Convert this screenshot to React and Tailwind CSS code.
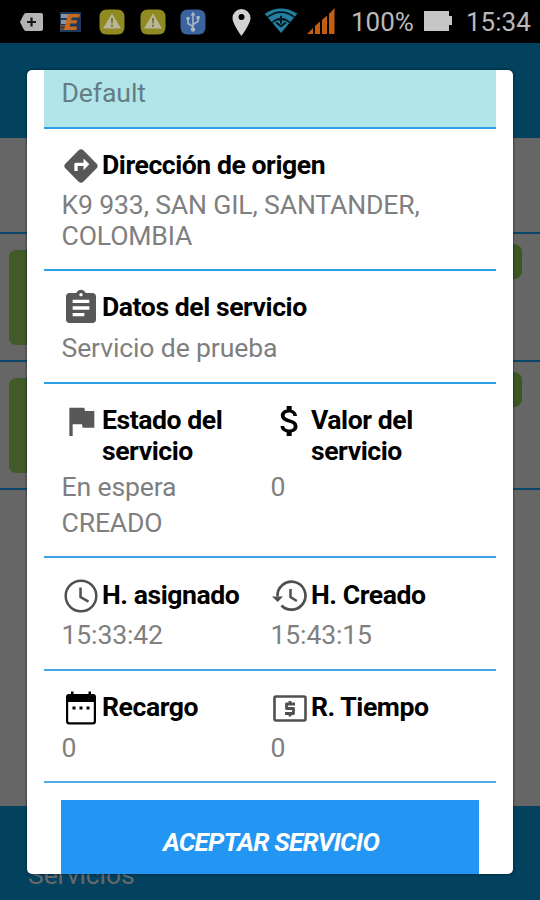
import { MdDirections, MdAssignment, MdFlag, MdAttachMoney } from "react-icons/md";

function WarningBadge() {
  return (
    <svg className="h-[26px] w-[26px]" viewBox="0 0 26 26">
      <path d="M8 .5h10q7.500 0 7.500 7.500v10q0 7.500-7.500 7.500H8Q.5 25.500.5 18V8Q.5.5 8 .5z" fill="#8f8a22" />
      <path d="M13 4.500 22 19.500H4z" fill="#b9b69a" />
      <path d="M12 9h2l-.3 5.500h-1.400zM12 15.800h2v2h-2z" fill="#77731d" />
    </svg>
  );
}

function StatusBar() {
  return (
    <div className="flex h-[43px] shrink-0 items-center bg-black pl-[20px] text-[#b9b9b9]">
      <svg className="h-[20px] w-[23px]" viewBox="0 0 23 20">
        <path d="M6 1h15q2 0 2 2v14q0 2-2 2H6q-1.500 0-2.500-2L0 10l3.500-7q1-2 2.500-2z" fill="#b4b4b4" />
        <path d="M11.500 5.500v9M7 10h9" stroke="#161616" strokeWidth="2.200" />
      </svg>
      <svg className="ml-[17px] h-[20px] w-[21px]" viewBox="0 0 21 20">
        <path d="M0 0h21v20H0z" fill="#1d3858" />
        <path d="M1 2h7v4H1zM1 8h6v4H1z" fill="#8b93a0" />
        <path d="M0 14h8M0 17h10" stroke="#6c4a38" strokeWidth="2" />
        <path d="M8 2h12l-.8 3.500h-7.400l-.6 2.700h6l-.8 3.300h-6l-.7 3H17l-.8 3.500H4z" fill="#c46a25" />
      </svg>
      <div className="ml-[18px] flex gap-[14.500px]">
        <WarningBadge />
        <WarningBadge />
        <svg className="h-[26px] w-[26px]" viewBox="0 0 26 26">
          <path d="M8 .5h10q7.500 0 7.500 7.500v10q0 7.500-7.500 7.500H8Q.5 25.500.5 18V8Q.5.5 8 .5z" fill="#3b639f" />
          <path d="M13 5v16M13 17.500l-5-3V10M13 15.500l5-3V9" fill="none" stroke="#aab5c5" strokeWidth="1.600" />
          <path d="m13 2.500 2.500 4h-5zM16.500 7h3.200v3.200h-3.200z" fill="#aab5c5" />
          <circle cx="8" cy="9.500" r="1.800" fill="#aab5c5" />
          <circle cx="13" cy="20.500" r="2.200" fill="#aab5c5" />
        </svg>
      </div>
      <svg className="mt-[2px] ml-[26px] h-[27px] w-[19px]" viewBox="0 0 19 27">
        <path d="M9.500 0a9 9 0 0 0-9 9c0 6 9 18 9 18s9-12 9-18a9 9 0 0 0-9-9z" fill="#d2d2d2" />
        <circle cx="9.500" cy="8" r="3" fill="#000" />
      </svg>
      <svg className="-mt-[3px] ml-[12px] h-[25px] w-[36px]" viewBox="0 0 36 26">
        <path d="M1 6Q18-5 35 6L18 26z" fill="#2380a2" />
        <path d="M4 9.500Q18-1 32 9.500M9 15q9-8 18 0" fill="none" stroke="#04171f" strokeWidth="1.800" />
        <path d="M18 8v8M13 15l5 4 5-4M14 12h8" fill="none" stroke="#04171f" strokeWidth="2" />
      </svg>
      <svg className="-mt-[2px] ml-[8px] h-[26px] w-[28px]" viewBox="0 0 28 26" fill="#c25d11">
        <path d="M0 26l6-6v6zM8 26v-8l5-4.500V26zM15 26V12l5-4.500V26zM22 26V6l5.500-6v26z" />
      </svg>
      <span className="ml-[16px] w-[62px] pt-[2px] text-[26px] whitespace-nowrap">100%</span>
      <svg className="-mt-[2px] ml-[11px] h-[20px] w-[28px]" viewBox="0 0 28 20">
        <path d="M0 0h25v5h3v9h-3v6H0z" fill="#c6c6c6" />
      </svg>
      <span className="ml-[14px] pt-[2px] text-[26px] whitespace-nowrap">15:34</span>
    </div>
  );
}

function ListItem() {
  return (
    <div className="flex h-[128px] items-start justify-between border-b-2 border-[#0b466a] pr-[18px] pl-[9px]">
      <div className="mt-[16px] h-[95px] w-[80px] rounded-[7px] bg-[#415a27]" />
      <div className="mt-[10px] h-[35px] w-[80px] rounded-[8px] bg-[#3b5822]" />
    </div>
  );
}

function BackgroundScreen() {
  return (
    <>
      <div className="h-[95px] shrink-0 bg-[#02425f]" />
      <div className="h-[668px] shrink-0 bg-[#666666]">
        <div className="h-[96px] border-b-2 border-[#0b466a]" />
        <ListItem />
        <ListItem />
      </div>
      <div className="flex-1 bg-[#02425f] pt-[53px] pl-[28px] text-[26.500px] leading-[31px] tracking-[-0.1px] text-[#66686a]">
        Servicios
      </div>
    </>
  );
}

function ClockIcon() {
  return (
    <svg className="h-[40px] w-[40px]" viewBox="0 0 40 40" fill="none" stroke="#505050">
      <circle cx="20" cy="20" r="15.300" strokeWidth="2.500" />
      <path d="M19.500 11.500V21l8 4.700" strokeWidth="2.500" />
    </svg>
  );
}

function HistoryIcon() {
  return (
    <svg className="h-[40px] w-[40px]" viewBox="0 0 40 40" fill="none" stroke="#505050">
      <path d="M7.500 20.500A14 14 0 1 1 11.500 29.500" strokeWidth="2.700" />
      <path d="M2 20.500h11l-5.300 5.500z" fill="#505050" stroke="none" />
      <path d="M20.500 13v8l6.300 4" strokeWidth="2.500" />
    </svg>
  );
}

function DateIcon() {
  return (
    <svg className="h-[40px] w-[40px]" viewBox="0 0 40 40">
      <path d="M10 3.500h2.500V6h15V3.500H30V6h2q3 0 3 3v24.500q0 3-3 3H8q-3 0-3-3V9q0-3 3-3h2zM7.200 14v19q0 1.300 1.300 1.300h23q1.300 0 1.300-1.300V14z" fillRule="evenodd" />
      <path d="M11.500 18.500h3v3h-3zM18.500 18.500h3v3h-3zM25.500 18.500h3v3h-3z" />
    </svg>
  );
}

function CashIcon() {
  return (
    <svg className="h-[40px] w-[40px]" viewBox="0 0 40 40" fill="none" stroke="#505050">
      <rect x="4.500" y="8.500" width="31" height="24" rx="1.500" strokeWidth="2.600" />
      <path d="M25 16h-8.500v4.500h7v5H15M20 13v3M20 25.500v3" strokeWidth="2.800" strokeLinejoin="round" />
    </svg>
  );
}

function Field({ icon, title, children }) {
  return (
    <div className="flex-1">
      <div className="flex items-start">
        <div className="h-[40px] w-[41px] shrink-0">{icon}</div>
        <div className="pt-[3px] text-[26.600px] leading-[31px] font-bold tracking-[-0.45px] whitespace-pre text-black">
          {title}
        </div>
      </div>
      {children}
    </div>
  );
}

function Value({ children }) {
  return (
    <div className="pl-[0.500px] text-[26.600px] leading-[31px] tracking-[-0.15px] whitespace-pre text-[#7f7f7f]">
      {children}
    </div>
  );
}

const iconGray = "h-[40px] w-[40px] text-[#585858]";

export default function App() {
  return (
    <div className="relative flex h-[900px] w-[540px] flex-col overflow-hidden bg-[#666666] font-[Roboto,sans-serif]">
      <StatusBar />
      <BackgroundScreen />
      <div className="absolute top-[70px] left-[27px] flex h-[804px] w-[486px] flex-col overflow-hidden rounded-[5px] bg-white px-[17px] shadow-[0_0_2px_1px_rgba(0,0,20,0.35)]">
        <div className="h-[59px] shrink-0 border-b-2 border-[#2d9fe6] bg-[#b1e5e9] pt-[7px] pl-[17.500px] text-[26.600px] leading-[31px] tracking-[-0.1px] text-[#637e83]">
          Default
        </div>
        <div className="flex h-[142px] shrink-0 border-b-2 border-[#2d9fe6] px-[17px] pt-[17px]">
          <Field icon={<MdDirections className={iconGray} />} title="Dirección de origen">
            <div className="pt-[3px]">
              <Value>{"K9 933, SAN GIL, SANTANDER,\nCOLOMBIA"}</Value>
            </div>
          </Field>
        </div>
        <div className="flex h-[113px] shrink-0 border-b-2 border-[#2d9fe6] px-[17px] pt-[17px]">
          <Field icon={<MdAssignment className={iconGray} />} title="Datos del servicio">
            <div className="pt-[4px]">
              <Value>Servicio de prueba</Value>
            </div>
          </Field>
        </div>
        <div className="flex h-[174px] shrink-0 border-b-2 border-[#3ba4e8] px-[17px] pt-[17px]">
          <Field icon={<MdFlag className={iconGray} />} title={"Estado del\nservicio"}>
            <div className="flex flex-col gap-[5px] pt-[5px]">
              <Value>En espera</Value>
              <Value>CREADO</Value>
            </div>
          </Field>
          <Field icon={<MdAttachMoney className="h-[40px] w-[40px] text-black" />} title={"Valor del\nservicio"}>
            <div className="pt-[5px]">
              <Value>0</Value>
            </div>
          </Field>
        </div>
        <div className="flex h-[113px] shrink-0 border-b-2 border-[#45a8e6] px-[17px] pt-[18px]">
          <Field icon={<ClockIcon />} title="H. asignado">
            <div className="pt-[3px]">
              <Value>15:33:42</Value>
            </div>
          </Field>
          <Field icon={<HistoryIcon />} title="H. Creado">
            <div className="pt-[3px]">
              <Value>15:43:15</Value>
            </div>
          </Field>
        </div>
        <div className="flex h-[112px] shrink-0 border-b-2 border-[#50ade4] px-[17px] pt-[17px]">
          <Field icon={<DateIcon />} title="Recargo">
            <div className="pt-[4px]">
              <Value>0</Value>
            </div>
          </Field>
          <Field icon={<CashIcon />} title="R. Tiempo">
            <div className="pt-[4px]">
              <Value>0</Value>
            </div>
          </Field>
        </div>
        <button className="mx-[17px] mt-[17px] flex flex-1 items-center justify-center bg-[#2396f3] pt-[11px] pl-[2px] text-[26px] font-bold tracking-[-0.75px] text-white italic">
          ACEPTAR SERVICIO
        </button>
      </div>
    </div>
  );
}
